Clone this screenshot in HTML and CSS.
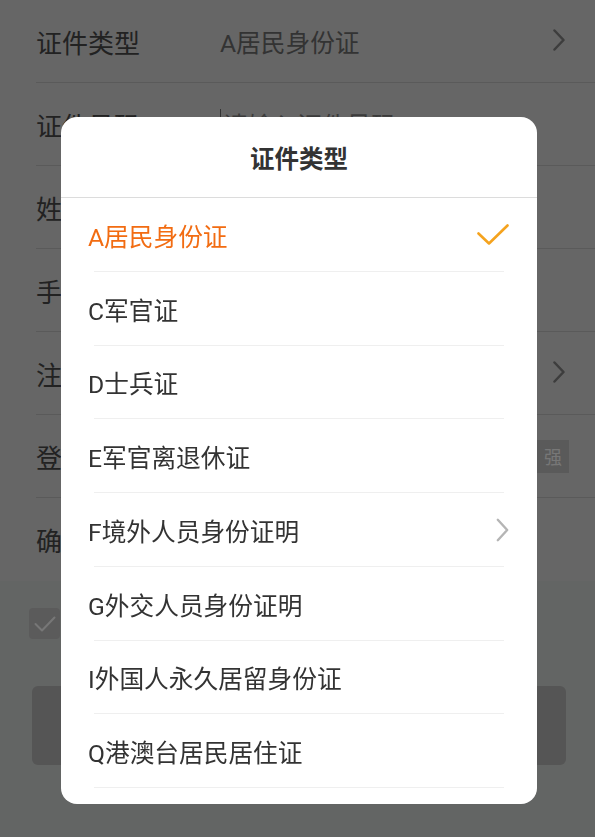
FILE: index.html
```html
<!DOCTYPE html>
<html lang="zh-CN">
<head>
<meta charset="utf-8">
<title>证件类型</title>
<link rel="stylesheet" href="styles.css">
</head>
<body>
<div class="page">
  <div class="form">
    <div class="row">
      <span class="label">证件类型</span>
      <span class="value">A居民身份证</span>
      <svg class="chev" width="12" height="22" viewBox="0 0 12 22"><path d="M1.5 1.5 L10.5 11 L1.5 20.5" fill="none" stroke="currentColor" stroke-width="2.5" stroke-linecap="round" stroke-linejoin="round"/></svg>
    </div>
    <div class="row">
      <span class="label">证件号码</span>
      <span class="input"><span class="caret"></span><span class="ph">请输入证件号码</span></span>
    </div>
    <div class="row">
      <span class="label">姓名</span>
    </div>
    <div class="row">
      <span class="label">手机号码</span>
    </div>
    <div class="row">
      <span class="label">注册地区</span>
      <span class="fill"></span>
      <svg class="chev" width="12" height="22" viewBox="0 0 12 22"><path d="M1.5 1.5 L10.5 11 L1.5 20.5" fill="none" stroke="currentColor" stroke-width="2.5" stroke-linecap="round" stroke-linejoin="round"/></svg>
    </div>
    <div class="row">
      <span class="label">登录密码</span>
      <span class="fill"></span>
      <div class="strength"><span>强</span></div>
    </div>
    <div class="row last">
      <span class="label">确认密码</span>
    </div>
  </div>
  <div class="footer">
    <div class="agree">
      <span class="box"><svg width="22" height="16" viewBox="0 0 22 16"><path d="M1.5 8 L8 14.5 L20.5 1.5" fill="none" stroke="currentColor" stroke-width="2" stroke-linecap="round" stroke-linejoin="round"/></svg></span>
    </div>
    <div class="submit"></div>
  </div>
</div>

<div class="mask"></div>

<div class="dialog">
  <div class="dialog-title">证件类型</div>
  <ul class="options">
    <li class="option selected">
      <span>A居民身份证</span>
      <svg class="tick" width="32" height="21" viewBox="0 0 32 21"><path d="M1.5 9.5 L12 19.5 L30.5 1.5" fill="none" stroke="currentColor" stroke-width="2.6" stroke-linecap="round" stroke-linejoin="round"/></svg>
    </li>
    <li class="option"><span>C军官证</span></li>
    <li class="option"><span>D士兵证</span></li>
    <li class="option"><span>E军官离退休证</span></li>
    <li class="option">
      <span>F境外人员身份证明</span>
      <svg class="more" width="13" height="24" viewBox="0 0 13 24"><path d="M1.8 1.8 L11.2 12 L1.8 22.2" fill="none" stroke="currentColor" stroke-width="2.4" stroke-linecap="round" stroke-linejoin="round"/></svg>
    </li>
    <li class="option"><span>G外交人员身份证明</span></li>
    <li class="option"><span>I外国人永久居留身份证</span></li>
    <li class="option"><span>Q港澳台居民居住证</span></li>
  </ul>
</div>
</body>
</html>
```

FILE: styles.css
```css
* { box-sizing: border-box; }

html, body {
  margin: 0;
  padding: 0;
}

body {
  font-family: Roboto, "Noto Sans CJK SC", sans-serif;
  background: #c6cac8;
  width: 595px;
  height: 837px;
  overflow: hidden;
}

.page {
  min-height: 837px;
  display: flex;
  flex-direction: column;
}

.form {
  background: #cccccc;
}

.row {
  height: 83px;
  margin-left: 36px;
  padding-right: 30px;
  border-bottom: 1px solid #b4b4b4;
  display: flex;
  align-items: center;
  font-size: 26px;
}

.row.last {
  border-bottom: none;
}

.label {
  width: 184px;
  flex: none;
  color: #444;
}

.value {
  flex: 1;
  font-size: 24.7px;
  color: #666;
}

.fill {
  flex: 1;
}

.input {
  flex: 1;
  display: flex;
  align-items: center;
}

.caret {
  width: 1px;
  height: 30px;
  background: #666;
  margin-right: 2px;
}

.ph {
  flex: 1;
  font-size: 24.7px;
  color: #777;
}

.chev {
  color: #7a7a7a;
  flex: none;
  margin-top: -2px;
}

.strength {
  display: flex;
  margin-right: -4px;
}

.strength span {
  width: 32px;
  height: 33px;
  display: flex;
  align-items: center;
  justify-content: center;
  background: #b4b4b4;
  color: #eeeeee;
  font-size: 18px;
}

.footer {
  flex: 1;
  background: #c6cac8;
  padding: 27px 29px 0 29px;
}

.agree {
  display: flex;
  align-items: center;
}

.box {
  width: 31px;
  height: 31px;
  border-radius: 4px;
  background: #b6b6b6;
  color: #eeeeee;
  display: flex;
  align-items: center;
  justify-content: center;
}

.submit {
  margin: 47px 0 0 3px;
  height: 79px;
  border-radius: 6px;
  background: #aaaaaa;
}

.mask {
  position: fixed;
  inset: 0;
  background: rgba(0, 0, 0, 0.5);
}

.dialog {
  position: fixed;
  top: 117px;
  left: 61px;
  width: 476px;
  background: #fff;
  border-radius: 16px;
  padding-bottom: 16px;
}

.dialog-title {
  height: 81px;
  border-bottom: 1px solid #dcdcdc;
  display: flex;
  align-items: center;
  justify-content: center;
  font-size: 24.5px;
  font-weight: bold;
  color: #333;
}

.options {
  list-style: none;
  margin: 0;
  padding: 0;
}

.option {
  position: relative;
  height: 73.75px;
  padding: 0 28px 0 27px;
  display: flex;
  align-items: center;
  justify-content: space-between;
  font-size: 24.7px;
  color: #333;
}

.option::after {
  content: "";
  position: absolute;
  left: 33px;
  right: 33px;
  bottom: 0;
  height: 1px;
  background: #efefef;
}

.option.selected {
  color: #f26c12;
}

.tick {
  color: #f5a31e;
}

.more {
  color: #b5b5b5;
}
```
